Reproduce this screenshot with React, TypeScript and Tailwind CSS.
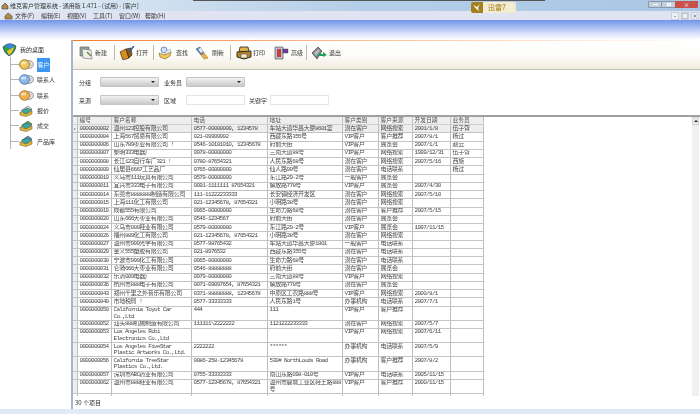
const cols = 'grid grid-cols-[5px_34px_80px_76px_75px_36px_34px_38px_33px]';

type Row = { v: string[]; h?: 'tall'; };

const rows: Row[] = [
  { v: ['0000000002', '温州123控股有限公司', '0577-00000009, 1234578', '车站大道华昌大厦8601室', '潜在客户', '网络搜索', '2001/1/8', '伍子胥'] },
  { v: ['0000000004', '上海567贸易有限公司', '021-09999992', '西藏东路355号', 'VIP客户', '客户推荐', '2007/8/1', '杨过'] },
  { v: ['0000000006', '山东789枣业有限公司 !', '0546-10101010, 12345678', '府前大街', 'VIP客户', '展览会', '2007/1/1', '赵云'] },
  { v: ['0000000007', '黎明333电器厂', '0978-00000000', '三南大道88号', 'VIP客户', '网络搜索', '1999/12/31', '伍子胥'] },
  { v: ['0000000008', '长江123自行车厂321 !', '0780-87654321', '人民东路68号', '潜在客户', '网络搜索', '2007/5/16', '西施'] },
  { v: ['0000000009', '仙居县6667工艺品厂', '0765-00000000', '仙人路99号', '潜在客户', '电话联系', '', '杨过'] },
  { v: ['0000000010', '义乌市111玩具有限公司', '0579-00000000', '东江路29-2号', '一般客户', '展览会', '', ''] },
  { v: ['0000000011', '宜兴市333电子有限公司', '0091-1111111 87654321', '解放路778号', 'VIP客户', '展览会', '2007/4/30', ''] },
  { v: ['0000000014', '东莞市8888888制造有限公司', '111-11222233333', '长安镇经济开发区', '潜在客户', '网络搜索', '2007/5/10', ''] },
  { v: ['0000000015', '上海111化工有限公司', '021-12345678, 87654321', '小明路38号', '潜在客户', '网络搜索', '', ''] },
  { v: ['0000000019', '成都555有限公司', '0965-00000000', '生命力路68号', '潜在客户', '客户推荐', '2007/5/15', ''] },
  { v: ['0000000020', '山东666大枣业有限公司', '0546-1234567', '府前大街', '潜在客户', '展览会', '', ''] },
  { v: ['0000000024', '义乌市000鞋业有限公司', '0579-00000000', '东江路29-2号', 'VIP客户', '展览会', '1997/11/15', ''] },
  { v: ['0000000026', '福州889化工有限公司', '021-12345678, 87654321', '小明路38号', '潜在客户', '网络搜索', '', ''] },
  { v: ['0000000027', '温州市999光学有限公司', '0577-98765432', '车站大道华昌大厦1801', '一般客户', '电话联系', '', ''] },
  { v: ['0000000029', '金义555塑胶有限公司', '021-8976532', '西藏东路355号', '潜在客户', '电话联系', '', ''] },
  { v: ['0000000030', '宁波市999化工有限公司', '0965-00000000', '生命力路68号', '潜在客户', '电话联系', '', ''] },
  { v: ['0000000031', '仑骑666大枣业有限公司', '0546-88888888', '府前大街', '潜在客户', '展览会', '', ''] },
  { v: ['0000000032', '乐清009电器厂', '0979-00000000', '三南大道88号', 'VIP客户', '网络搜索', '', ''] },
  { v: ['0000000036', '杭州市888电子有限公司', '0071-09097654, 87654321', '解放路778号', '潜在客户', '展览会', '', ''] },
  { v: ['0000000043', '郑州千里之外音乐有限公司', '0371-88888888, 12345678', '中原区工农路888号', 'VIP客户', '网络搜索', '2000/8/1', ''] },
  { v: ['0000000049', '市地税局 !', '0577-33333333', '人民东路1号', '办事机构', '电话联系', '2007/7/1', ''] },
  { h: 'tall', v: ['0000000050', 'California Toyot Car Co.,Ltd', '444', '111', 'VIP客户', '客户推荐', '', ''] },
  { v: ['0000000052', '汕头888机械制造有限公司', '111111\\2222222', '1121222233333', '潜在客户', '网络搜索', '2007/5/7', ''] },
  { h: 'tall', v: ['0000000053', 'Los Angeles Robi Electronics Co.,Ltd', '', '', 'VIP客户', '网络搜索', '2007/6/11', ''] },
  { h: 'tall', v: ['0000000054', 'Los Angeles FiveStar Plastic Artworks Co.,Ltd.', '2222222', '******', '办事机构', '电话联系', '2007/5/9', ''] },
  { h: 'tall', v: ['0000000056', 'California TreeStar Plastics Co.,Ltd.', '0086-258-12345678', '530# NorthLouds Road', '办事机构', '客户推荐', '2007/8/2', ''] },
  { v: ['0000000057', '深圳市ABC药业有限公司', '0755-33333333', '南山东路098-010号', 'VIP客户', '电话联系', '2005/11/15', ''] },
  { h: 'tall', v: ['0000000062', '温州市888鞋业有限公司', '0577-12345678, 87654321', '温州市鹿城工业区鞋王路888号', 'VIP客户', '客户推荐', '2000/11/15', ''] },
];

const headers = ['编号', '客户名称', '电话', '地址', '客户类别', '客户来源', '开发日期', '业务员'];
const menus = ['文件(F)', '编辑(E)', '视图(V)', '工具(T)', '窗口(W)', '帮助(H)'];

// half-width latin and full-width CJK need different spacing, like the old bitmap font
function CellText({ text }: { text: string }) {
  const parts = text.split(/([\x00-\x7f]+)/).filter(Boolean);
  return (
    <>
      {parts.map((p, i) => (
        <span key={i} className={/^[\x00-\x7f]/.test(p) ? 'tracking-[-0.7px]' : 'tracking-[-0.3px]'}>{p}</span>
      ))}
    </>
  );
}

function Oval({ color, dark }: { color: string; dark: string }) {
  return (
    <svg width="15" height="11" viewBox="0 0 15 11" className="shrink-0">
      <ellipse cx="10" cy="5.5" rx="4.5" ry="4" fill="#d8d8d8" stroke="#777" strokeWidth="0.6" />
      <ellipse cx="5.5" cy="5.5" rx="5" ry="4.8" fill={color} stroke={dark} strokeWidth="0.7" />
      <ellipse cx="4.5" cy="4" rx="2.8" ry="1.6" fill="#fff" opacity="0.55" />
    </svg>
  );
}

function Stack({ paper }: { paper: string }) {
  return (
    <svg width="15" height="12" viewBox="0 0 15 12" className="shrink-0">
      <path d="M3 5 L9 1 L13 4 L7 8 Z" fill={paper} stroke="#444" strokeWidth="0.5" />
      <path d="M2 6 L8 3 L13 5 L7 9 Z" fill="#3fa7a0" stroke="#333" strokeWidth="0.4" />
      <path d="M1 7 L7 9 L13 6 L13 9 L7 11.5 L1 10 Z" fill="#e5b93a" stroke="#5b4a10" strokeWidth="0.5" />
    </svg>
  );
}

function DesktopIcon() {
  return (
    <svg width="15" height="15" viewBox="0 0 15 15" className="shrink-0">
      <path d="M1 5 Q7 -1 14 4 Q13 11 7 14 Q2 11 1 5 Z" fill="#2f9e44" stroke="#23405f" strokeWidth="0.7" />
      <path d="M3 4 Q7 1 12 3 L9 7 Z" fill="#3b82f6" />
      <path d="M5 9 L12 5 Q11 10 7 13 Z" fill="#f2c230" />
    </svg>
  );
}

function NewIcon() {
  return (
    <svg width="14" height="14" viewBox="0 0 14 14" className="shrink-0">
      <path d="M1 1 L10 1 L10 10 L1 10 Z" fill="#9aa39a" stroke="#555" strokeWidth="0.6" />
      <path d="M3 3 L12 4 L13 13 L4 12 Z" fill="#eef0ea" stroke="#666" strokeWidth="0.6" />
      <path d="M8 6 L12 10" stroke="#5c8a4a" strokeWidth="1.4" />
    </svg>
  );
}

function OpenIcon() {
  return (
    <svg width="16" height="14" viewBox="0 0 16 14" className="shrink-0">
      <path d="M1 6 L7 3 L10 12 L4 14 Z" fill="#d98c1f" stroke="#3a2a10" strokeWidth="0.7" />
      <path d="M7 3 L12 2 L13 9 L10 12 Z" fill="#8f5a16" stroke="#3a2a10" strokeWidth="0.7" />
      <path d="M10 6 L15 0" stroke="#2c63b8" strokeWidth="1.6" />
    </svg>
  );
}

function FindIcon() {
  return (
    <svg width="14" height="14" viewBox="0 0 14 14" className="shrink-0">
      <circle cx="6" cy="4" r="3" fill="#cfe0f5" stroke="#4a6d9c" strokeWidth="0.7" />
      <path d="M1 7 L6 9 L13 6 L12 10 L7 13 L2 11 Z" fill="#f1c95a" stroke="#7a5f1c" strokeWidth="0.6" />
      <path d="M7 6 L12 3 L13 6 L8 8 Z" fill="#e8eef5" stroke="#777" strokeWidth="0.4" />
    </svg>
  );
}

function RefreshIcon() {
  return (
    <svg width="14" height="14" viewBox="0 0 14 14" className="shrink-0">
      <path d="M1 3 L5 1 L9 7 L6 9 Z" fill="#5a7fb5" stroke="#2f4a70" strokeWidth="0.5" />
      <path d="M6 9 L9 7 L13 12 L9 13 Z" fill="#eeb04a" stroke="#9a6a1c" strokeWidth="0.5" />
      <path d="M3 3 L6 2 L8 6 L6 7 Z" fill="#e9eef6" />
    </svg>
  );
}

function PrintIcon() {
  return (
    <svg width="16" height="14" viewBox="0 0 16 14" className="shrink-0">
      <path d="M4 1 L12 1 L13 6 L3 6 Z" fill="#e0b34a" stroke="#222" strokeWidth="0.8" />
      <path d="M1 6 L15 5 L15 11 L8 13 L1 11 Z" fill="#b7862b" stroke="#222" strokeWidth="0.9" />
      <path d="M5 8 L11 8 L11 12 L5 12 Z" fill="#f3ead0" stroke="#333" strokeWidth="0.5" />
    </svg>
  );
}

function AdvancedIcon() {
  return (
    <svg width="15" height="14" viewBox="0 0 15 14" className="shrink-0">
      <path d="M1 1 L9 1 L9 13 L1 13 Z" fill="#b8c0d4" stroke="#444" strokeWidth="0.6" />
      <path d="M3 3 L7 3 L7 11 L3 11 Z" fill="#c8403a" />
      <path d="M9 3 L14 3 L14 7 L9 7 Z" fill="#6a3fa0" stroke="#333" strokeWidth="0.4" />
    </svg>
  );
}

function ExitIcon() {
  return (
    <svg width="16" height="14" viewBox="0 0 16 14" className="shrink-0">
      <path d="M1 7 L7 1 L11 5 L6 13 Z" fill="#7c8288" stroke="#333" strokeWidth="0.6" />
      <path d="M3 7 L7 3 L9 5 L5 10 Z" fill="#b5bbc0" />
      <path d="M7 8 L12 8 L12 6 L16 9 L12 11 L12 10 L7 10 Z" fill="#18a558" />
    </svg>
  );
}

function ToolItem({ icon, label, className }: { icon: React.ReactNode; label: string; className: string }) {
  return (
    <div className={`flex items-center ${className}`}>
      {icon}
      <span className="text-[6px] text-[#333]">{label}</span>
    </div>
  );
}

function Sep({ className }: { className: string }) {
  return <div className={`h-[15px] w-px bg-[#bdb9ac] ${className}`} />;
}

function FakeSelect() {
  return (
    <div className="flex h-[10px] w-[59px] items-center justify-end rounded-[1px] border border-[#c4c4c4] bg-gradient-to-b from-[#f2f2f2] to-[#c9c9c9] pr-[3px]">
      <div className="h-0 w-0 border-x-[2px] border-t-[2px] border-x-transparent border-t-[#222]" />
    </div>
  );
}

function SideItem({ icon, label, active, last }: { icon: React.ReactNode; label: string; active?: boolean; last?: boolean }) {
  return (
    <div className={`flex h-[15.3px] items-center ${last ? '-mb-[8px]' : ''}`}>
      <div className="w-[8px] border-t border-[#b5b5b5]" />
      {icon}
      <span className={`ml-[3px] flex h-[14px] items-center text-[6px] ${active ? 'w-[13px] justify-center bg-[#3d97f0] text-white' : 'text-[#333]'}`}>
        {label}
      </span>
    </div>
  );
}

export default function App() {
  return (
    <div className="relative flex h-[414px] w-[700px] flex-col overflow-hidden bg-white blur-[0.3px] [font-family:'Noto_Sans_CJK_SC','Liberation_Sans',sans-serif]">
      {/* title bar */}
      <div className="relative flex h-[11px] items-center bg-gradient-to-r from-[#e4edf6] via-[#b6cfe8] to-[#a9c6e4] pl-[1px]">
        <svg width="8" height="8" viewBox="0 0 8 8" className="mr-[1px]">
          <path d="M1 4 L4 1 L7 4 L7 7 L1 7 Z" fill="#b08a3e" stroke="#444" strokeWidth="0.6" />
        </svg>
        <span className="text-[6px] text-[#333]">维克客户管理系统 - 通用版 1.471 - (试用) - [客户]</span>
        <div className="absolute left-[193px] top-0 h-px w-[352px] bg-[#555]" />
        <div className="absolute left-[648px] top-px flex h-[7px]">
          <div className="flex w-[14px] items-center justify-center rounded-bl-[1px] border border-[#8898a8] bg-[#c3d0de]">
            <div className="h-px w-[5px] bg-white" />
          </div>
          <div className="flex w-[13px] items-center justify-center border-y border-[#8898a8] bg-[#c3d0de]">
            <div className="h-[3px] w-[4px] border border-white" />
          </div>
          <div className="flex w-[23px] items-center justify-center rounded-br-[1px] bg-[#c9504a] text-[6px] leading-none text-white">×</div>
        </div>
      </div>

      {/* menu bar */}
      <div className="flex h-[9px] items-center bg-[#dfe3f2] pl-[4px]">
        <svg width="9" height="8" viewBox="0 0 9 8" className="mr-[2px]">
          <path d="M1 4 L4 1 L8 4 L8 7 L1 7 Z" fill="#b08a3e" stroke="#444" strokeWidth="0.6" />
        </svg>
        <div className="flex gap-[7px]">
          {menus.map((m) => (
            <span key={m} className="w-[19px] whitespace-nowrap text-[6px] leading-none text-[#333]">{m}</span>
          ))}
        </div>
        <div className="ml-auto mr-px flex gap-[2px]">
          {['-', '□', '×'].map((s) => (
            <div key={s} className="flex h-[8px] w-[8px] items-center justify-center border border-[#c9cfdd] bg-[#eef0f7] text-[6px] leading-none text-[#444]">{s}</div>
          ))}
        </div>
      </div>

      {/* blue banner */}
      <div className="h-[20px] bg-gradient-to-b from-[#7394ea] via-[#dbe4fa] via-70% to-white" />

      {/* thunder tag */}
      <div className="absolute left-[471px] top-[2px] flex h-[11px] w-[45px] items-center overflow-hidden rounded-[2px] bg-[#f3ecd0]">
        <div className="flex h-full w-[12px] items-center justify-center bg-[#a1801f]">
          <svg width="8" height="7" viewBox="0 0 8 7">
            <path d="M0 1 L4 3 L7 0 L5 4 L6 7 L3 4.5 Z" fill="#fff" />
          </svg>
        </div>
        <span className="ml-[5px] text-[7px] leading-none text-[#a1801f]">迅雷7</span>
      </div>

      <div className="flex min-h-0 flex-1">
        {/* tree */}
        <div className="w-[71px] shrink-0 pl-[2px] pt-[2px]">
          <div className="flex items-center">
            <DesktopIcon />
            <span className="ml-[3px] text-[6px] text-[#333]">我的桌面</span>
          </div>
          <div className="ml-[8px] border-l border-[#b5b5b5]">
            <SideItem icon={<Oval color="#eec65a" dark="#7a5f1c" />} label="客户" active />
            <SideItem icon={<Oval color="#8fb8ea" dark="#35608f" />} label="联系人" />
            <SideItem icon={<Oval color="#f0b04a" dark="#8a5a14" />} label="联系" />
            <SideItem icon={<Stack paper="#e8e8e8" />} label="报价" />
            <SideItem icon={<Stack paper="#5fae6a" />} label="成交" />
            <SideItem icon={<Stack paper="#4f8fd0" />} label="产品库" last />
          </div>
        </div>

        {/* content */}
        <div className="flex min-w-0 flex-1 flex-col border-l-2 border-[#a9b4c6]">
          <div className="h-px bg-gradient-to-r from-[#f47a2a] via-[#fbc49c] via-50% to-white" />

          {/* toolbar */}
          <div className="flex h-[29px] items-center border-b border-[#c6c3ba] bg-gradient-to-b from-white via-[#fdfcf8] to-[#f1ecdf] pb-[5px]">
            <ToolItem icon={<NewIcon />} label="新建" className="ml-[6px] w-[34px] gap-[2px]" />
            <Sep className="ml-[1px]" />
            <ToolItem icon={<OpenIcon />} label="打开" className="ml-[4px] w-[30px] gap-[1px]" />
            <Sep className="ml-[4px]" />
            <ToolItem icon={<FindIcon />} label="查找" className="ml-[4px] w-[33px] gap-[4px]" />
            <ToolItem icon={<RefreshIcon />} label="刷新" className="ml-[4px] w-[33px] gap-[3px]" />
            <Sep className="ml-[2px]" />
            <ToolItem icon={<PrintIcon />} label="打印" className="ml-[5px] w-[34px] gap-[1px]" />
            <ToolItem icon={<AdvancedIcon />} label="高级" className="ml-[4px] w-[30px] gap-[2px]" />
            <Sep className="ml-[2px]" />
            <ToolItem icon={<ExitIcon />} label="退出" className="ml-[4px] w-[32px] gap-[2px]" />
          </div>

          {/* filters */}
          <div className="flex h-[45px] flex-col gap-[8px] pl-[6px] pt-[7px] text-[6px] text-[#333]">
            <div className="flex h-[10px] items-center">
              <span className="w-[21px]">分组</span>
              <FakeSelect />
              <span className="ml-[5px] w-[22px]">业务员</span>
              <FakeSelect />
            </div>
            <div className="flex h-[10px] items-center">
              <span className="w-[21px]">来源</span>
              <FakeSelect />
              <span className="ml-[5px] w-[22px]">区域</span>
              <div className="h-[10px] w-[59px] border border-[#e4e4e4]" />
              <span className="ml-[4px] w-[21px]">关键字</span>
              <div className="h-[10px] w-[59px] border border-[#e4e4e4]" />
            </div>
          </div>

          {/* grid */}
          <div className="relative h-[281px] overflow-hidden border-t-2 border-[#a0a0a0] [font-family:'Liberation_Mono','Noto_Sans_CJK_SC',monospace]">
            <div className={`${cols} h-[8px] w-[411px] border-b border-[#d0d0d0] bg-[#eeeeee] text-[5.75px] leading-[7.5px] text-[#555]`}>
              <div className="border-r border-[#c4c4c4]" />
              {headers.map((h) => (
                <div key={h} className="overflow-hidden whitespace-nowrap border-r border-[#c4c4c4] pl-[1.5px]">{h}</div>
              ))}
            </div>
            {rows.map((row, i) => (
              <div
                key={row.v[0]}
                className={`${cols} w-[411px] border-b border-[#c4c4c4] text-[6px] leading-[6.5px] text-[#4a4a4a] ${row.h === 'tall' ? 'h-[14.2px]' : 'h-[8.25px]'}`}
              >
                <div className="flex items-center justify-center border-r border-[#bdbdbd] bg-[#eeeeee] text-[4px] leading-none">{i === 0 ? '▸' : ''}</div>
                {row.v.map((c, j) => (
                  <div key={j} className={`overflow-hidden border-r border-[#bdbdbd] pl-[1.5px] pt-[0.5px] ${i === 0 ? 'bg-[#eeeeee]' : ''}`}>
                    <CellText text={c} />
                  </div>
                ))}
              </div>
            ))}
            <div className={`${cols} h-[8px] w-[411px]`}>
              {Array.from({ length: 9 }, (_, i) => (
                <div key={i} className="border-r border-[#bdbdbd]" />
              ))}
            </div>

            {/* scrollbar */}
            <div className="absolute bottom-0 right-[1px] top-0 flex w-[7px] flex-col items-center bg-[#f0f0f0]">
              <div className="flex h-[8px] w-full items-center justify-center border border-[#d4d4d4] bg-[#e8e8e8]">
                <div className="h-0 w-0 border-x-[2px] border-b-[2px] border-x-transparent border-b-[#222]" />
              </div>
            </div>
          </div>

          {/* status */}
          <div className="flex h-[13px] items-center pl-[2px] text-[6px] text-[#333]">30 个项目</div>
        </div>
      </div>

      <div className="h-[5px] bg-[#dfeaf5]" />
    </div>
  );
}
